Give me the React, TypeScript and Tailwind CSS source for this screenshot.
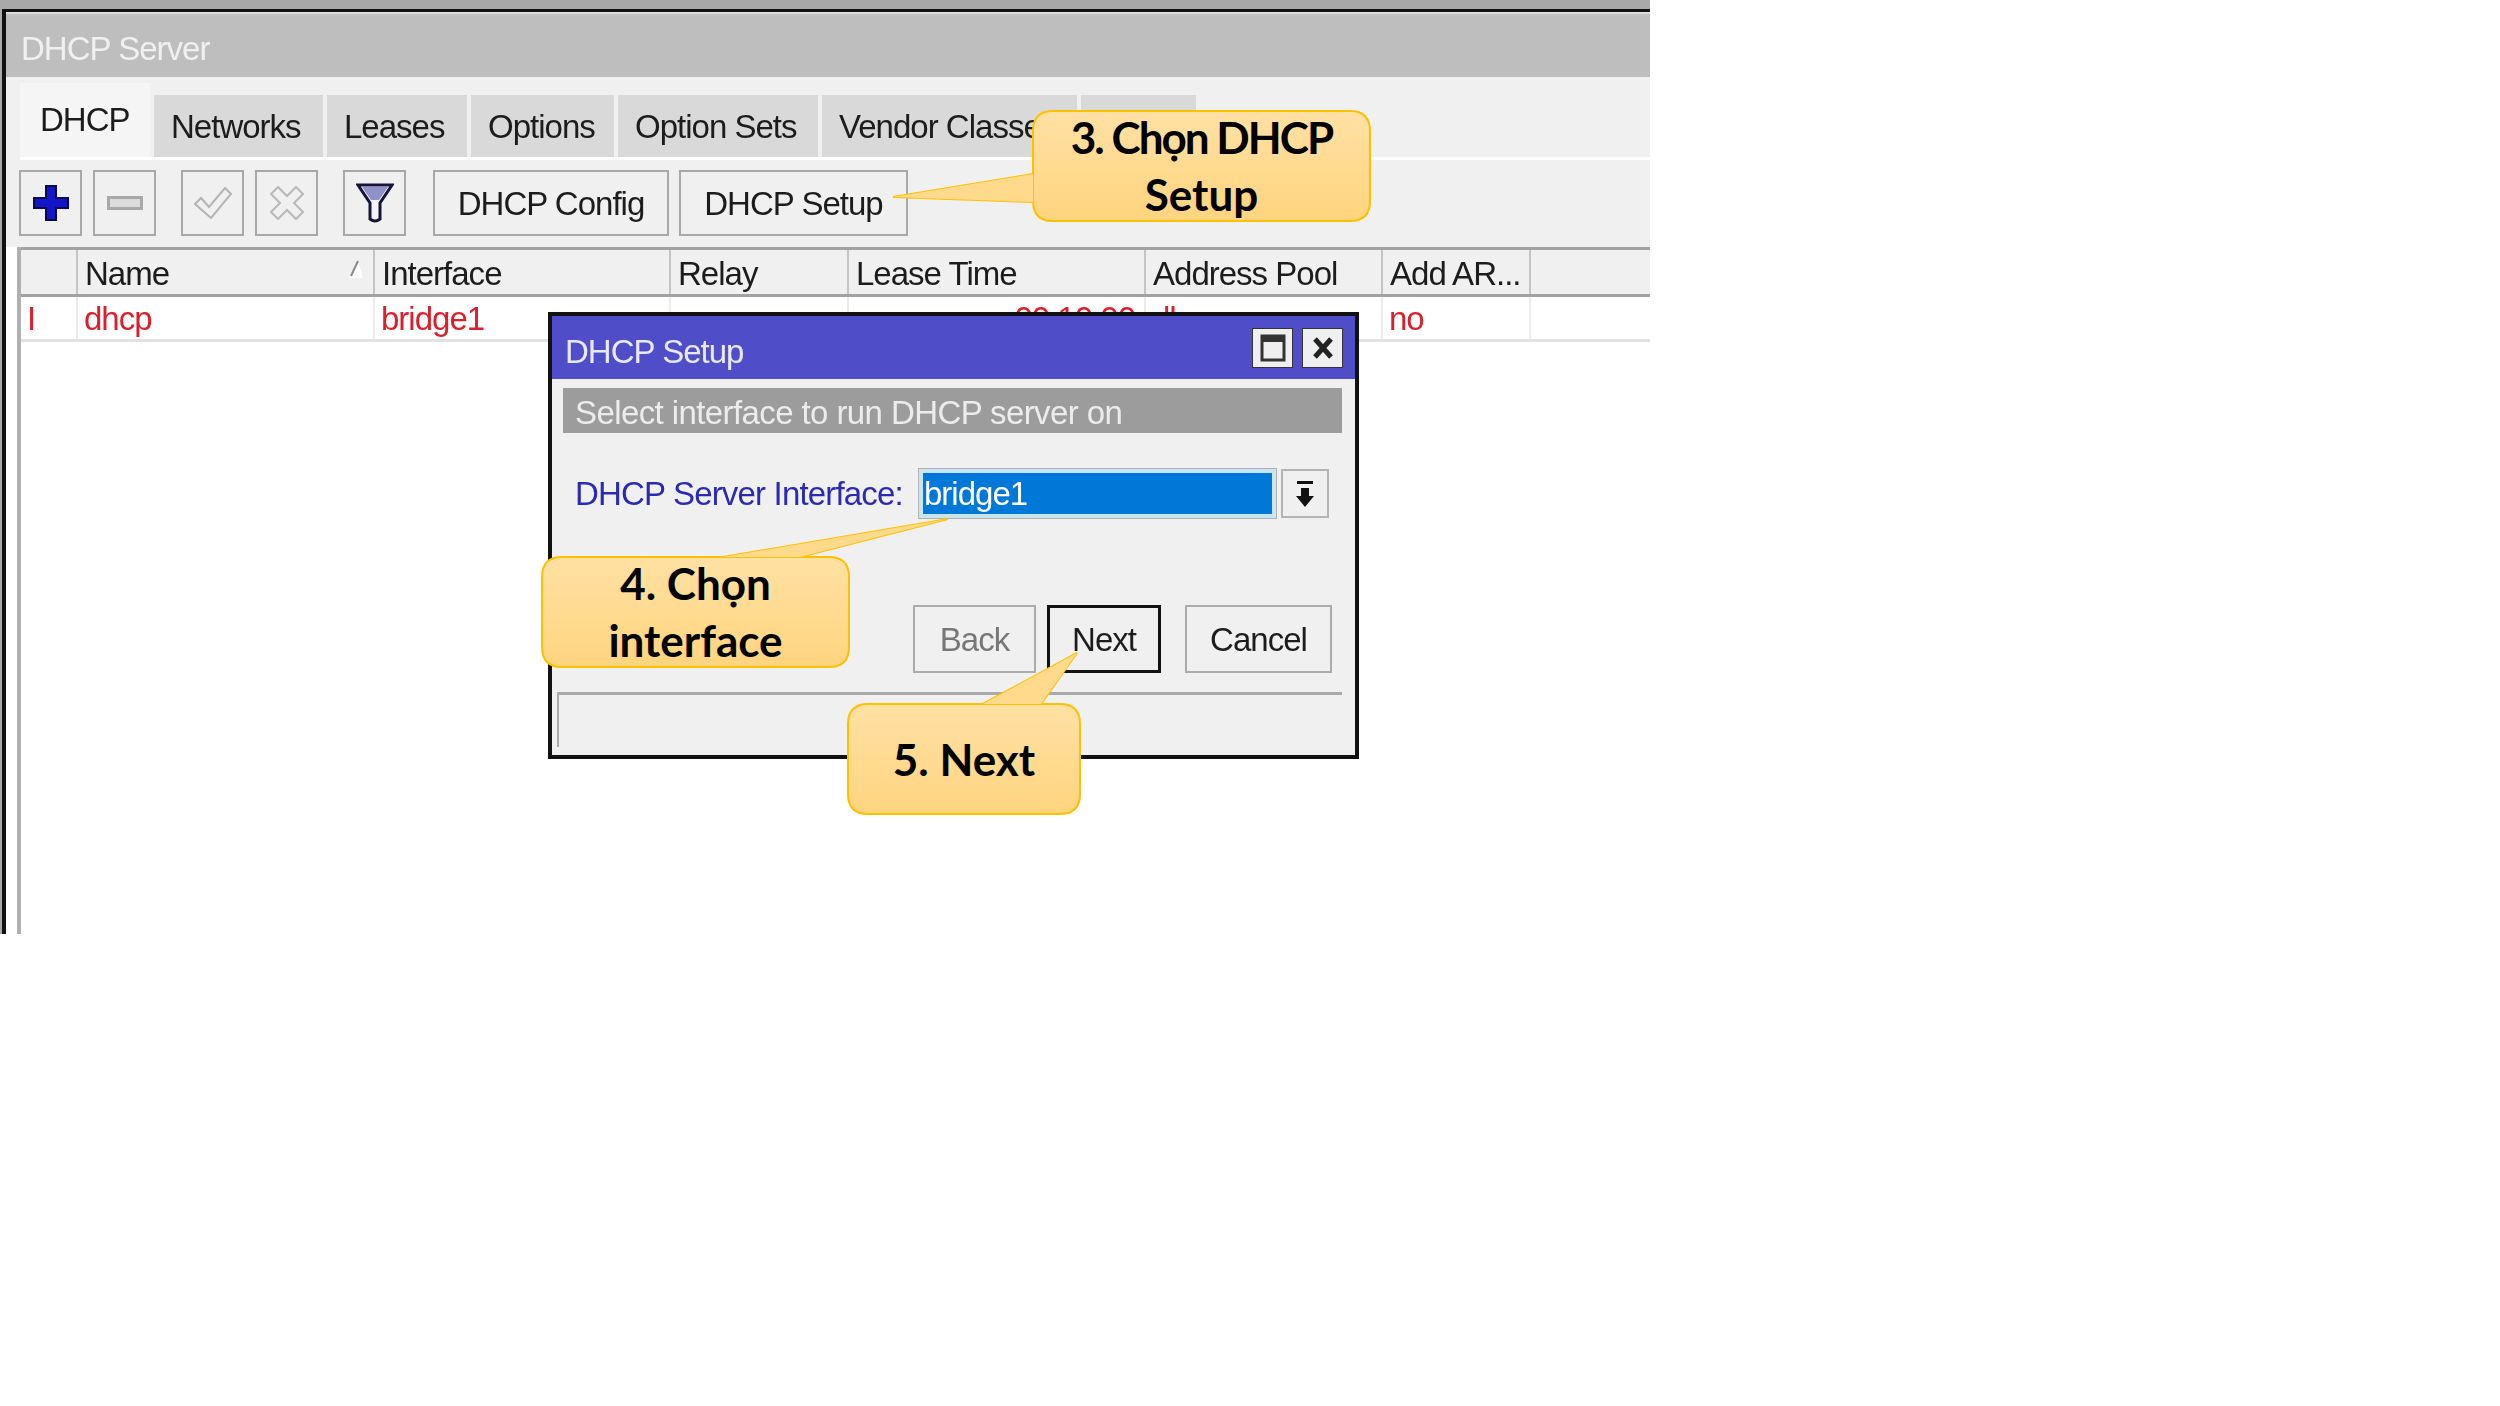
const tabs = [
  { label: "DHCP", w: "w-[130px]", active: true },
  { label: "Networks", w: "w-[169px]" },
  { label: "Leases", w: "w-[140px]" },
  { label: "Options", w: "w-[143px]" },
  { label: "Option Sets", w: "w-[200px]" },
  { label: "Vendor Classes", w: "w-[255px]" },
  { label: "", w: "w-[115px]" },
];

const columns = [
  { label: "", w: "w-[57px]" },
  { label: "Name", w: "w-[297px]", sort: true },
  { label: "Interface", w: "w-[296px]" },
  { label: "Relay", w: "w-[178px]" },
  { label: "Lease Time", w: "w-[297px]" },
  { label: "Address Pool", w: "w-[237px]" },
  { label: "Add AR...", w: "w-[148px]" },
];

const row = ["I", "dhcp", "bridge1", "", "00:10:00", "dhcp", "no"];

function IconButton({ children }: { children: React.ReactNode }) {
  return (
    <button className="flex h-[66px] w-[63px] items-center justify-center border-2 border-[#a8a8a8] bg-[#f0f0f0]">
      {children}
    </button>
  );
}

function TextButton({ label, className }: { label: string; className: string }) {
  return <button className={`h-[66px] border-2 border-[#a8a8a8] bg-[#f0f0f0] pt-[2px] text-[#1c1c1c] ${className}`}>{label}</button>;
}

function Callout({ className, w, h, tail, lines }: { className: string; w: number; h: number; tail: string; lines: { text: string; cls?: string }[] }) {
  const r = 20;
  const rect = `M${r} 0H${w - r}Q${w} 0 ${w} ${r}V${h - r}Q${w} ${h} ${w - r} ${h}H${r}Q0 ${h} 0 ${h - r}V${r}Q0 0 ${r} 0Z`;
  const id = `grad-${w}-${h}`;
  return (
    <div className={`absolute flex flex-col items-center justify-center font-['Lato',sans-serif] text-[44px] font-bold leading-[57px] text-black ${className}`}>
      <svg className="absolute inset-0 overflow-visible" width={w} height={h}>
        <defs>
          <linearGradient id={id} x1="0" y1="0" x2="0" y2="1">
            <stop offset="0" stopColor="#ffe1a4" />
            <stop offset="1" stopColor="#ffd47e" />
          </linearGradient>
        </defs>
        <path d={tail} fill="#ffd98c" stroke="#ffc000" strokeWidth="2" />
        <path d={rect} fill={`url(#${id})`} stroke="#ffc000" strokeWidth="2" />
        <path d={tail} fill="#ffd98c" stroke="none" />
      </svg>
      {lines.map((l) => (
        <span key={l.text} className={`relative ${l.cls ?? ""}`}>{l.text}</span>
      ))}
    </div>
  );
}

function Dialog() {
  return (
    <div className="absolute left-[548px] top-[312px] flex h-[447px] w-[811px] flex-col border-[4px] border-[#111] bg-[#f0f0f0] text-[33px] tracking-[-0.03em]">
      <div className="flex h-[63px] items-center justify-between bg-[#4f4ec8] pl-[13px] pr-[12px] text-[#e8e8f4]">
        <span className="mt-[8px]">DHCP Setup</span>
        <div className="flex gap-[9px]">
          <div className="flex h-[40px] w-[41px] items-center justify-center border border-[#333] bg-[#efefef]">
            <svg width="26" height="28" viewBox="0 0 26 28">
              <rect x="2" y="2" width="22" height="24" fill="none" stroke="#333" strokeWidth="3" />
              <rect x="2" y="2" width="22" height="6" fill="#333" />
            </svg>
          </div>
          <div className="flex h-[40px] w-[41px] items-center justify-center border border-[#333] bg-[#efefef]">
            <svg width="22" height="24" viewBox="0 0 22 24">
              <path d="M3 3 19 21M19 3 3 21" stroke="#222" strokeWidth="5" />
            </svg>
          </div>
        </div>
      </div>
      <div className="ml-[11px] mr-[13px] mt-[9px] flex h-[45px] items-center bg-[#9c9c9c] pl-[12px] pt-[5px] tracking-[-0.018em] text-[#ececec]">Select interface to run DHCP server on</div>
      <div className="mt-[36px] flex h-[49px] items-center pl-[23px]">
        <span className="w-[344px] pt-[1px] tracking-[-0.025em] text-[#2a2ab4]">DHCP Server Interface:</span>
        <div className="flex h-full w-[357px] items-center border-[4px] border-[#c8e6f2] bg-[#0078d7] pl-[1px] text-white outline outline-1 outline-[#b0b0b0]">bridge1</div>
        <button className="ml-[5px] flex h-full w-[48px] items-center justify-center border-2 border-[#b4b4b4]">
          <svg width="20" height="28" viewBox="0 0 20 28">
            <rect x="2" y="1" width="16" height="3" fill="#111" />
            <path d="M6 8h8v8h5L10 27 1 16h5Z" fill="#111" />
          </svg>
        </button>
      </div>
      <div className="mt-[87px] flex justify-end pr-[23px]">
        <button className="h-[68px] w-[123px] border-2 border-[#ababab] pt-[1px] text-[#777]">Back</button>
        <button className="ml-[11px] h-[68px] w-[114px] border-[3px] border-[#111] pt-[1px] text-[#1c1c1c]">Next</button>
        <button className="ml-[24px] h-[68px] w-[147px] border-2 border-[#ababab] pt-[1px] text-[#1c1c1c]">Cancel</button>
      </div>
      <div className="ml-[5px] mr-[13px] mt-[19px] h-[55px] border-l-2 border-t-[3px] border-[#aaaaaa]" />
    </div>
  );
}

export default function App() {
  return (
    <div className="relative h-[1406px] w-[2500px] overflow-hidden bg-white font-['Liberation_Sans',sans-serif]">
      <div className="relative h-[934px] w-[1650px] blur-[0.6px]">
        <div className="flex h-full flex-col bg-[#a9a9a9] pl-[2px] pt-[9px] text-[33px] tracking-[-0.03em]">
          <div className="flex min-h-0 flex-1 flex-col border-l-[4px] border-t-[3px] border-[#111] bg-white">
            <div className="flex h-[65px] items-center border-t-2 border-[#dcdcdc] bg-[#bebebe] pl-[15px] pt-[7px] text-[#f0f0f0]">DHCP Server</div>
            <div className="bg-[#f0f0f0] pl-[13px]">
              <div className="ml-[1px] flex h-[83px] items-end gap-[4px] border-b-[3px] border-white">
                {tabs.map((t) => (
                  <div
                    key={t.w}
                    className={
                      t.active
                        ? `flex h-[74px] items-center bg-[#f5f5f5] pl-[20px] text-[#1c1c1c] ${t.w}`
                        : `flex h-[62px] items-center overflow-hidden whitespace-nowrap bg-[#d9d9d9] pl-[17px] pt-[2px] text-[#1c1c1c] ${t.w}`
                    }
                  >
                    {t.label}
                  </div>
                ))}
              </div>
              <div className="flex items-center pb-[11px] pt-[10px]">
                <IconButton>
                  <svg width="36" height="36" viewBox="0 0 36 36">
                    <path d="M13 1h10v12h12v10H23v12H13V23H1V13h12Z" fill="#1414c8" stroke="#0a0a50" strokeWidth="2" />
                  </svg>
                </IconButton>
                <div className="ml-[11px]">
                  <IconButton>
                    <svg width="36" height="14" viewBox="0 0 36 14">
                      <rect x="1.5" y="1.5" width="33" height="11" fill="#dcdcdc" stroke="#a8a8a8" strokeWidth="3" />
                    </svg>
                  </IconButton>
                </div>
                <div className="ml-[25px]">
                  <IconButton>
                    <svg width="38" height="32" viewBox="0 0 38 32">
                      <path d="M1 17l6-6 8 9L31 1l6 6-20 24Z" fill="none" stroke="#b4b4b4" strokeWidth="2" />
                    </svg>
                  </IconButton>
                </div>
                <div className="ml-[11px]">
                  <IconButton>
                    <svg width="34" height="34" viewBox="0 0 34 34">
                      <path d="M8 1l9 9 9-9 7 7-9 9 9 9-7 7-9-9-9 9-7-7 9-9-9-9Z" fill="none" stroke="#b8b8b8" strokeWidth="2" />
                    </svg>
                  </IconButton>
                </div>
                <div className="ml-[25px]">
                  <IconButton>
                    <svg width="38" height="40" viewBox="0 0 38 40">
                      <path d="M2 2h34L24 20v16q-5 4-10 0V20Z" fill="#f4f4fa" stroke="#14143c" strokeWidth="3" />
                      <path d="M6 4h26L23 17H15Z" fill="#8f92c8" />
                    </svg>
                  </IconButton>
                </div>
                <TextButton label="DHCP Config" className="ml-[27px] w-[236px]" />
                <TextButton label="DHCP Setup" className="ml-[10px] w-[229px]" />
              </div>
            </div>
            <div className="ml-[11px] flex-1 border-l-4 border-[#b0b0b0] bg-white">
              <div className="flex h-[50px] border-y-[3px] border-[#a2a2a2] bg-[#f0f0f0]">
                {columns.map((c) => (
                  <div key={c.w + c.label} className={`relative flex items-center border-r-2 border-[#c4c4c4] pl-[7px] pt-[3px] text-[#1c1c1c] ${c.w}`}>
                    {c.label}
                    {c.sort && (
                      <svg className="absolute right-[7px] top-[10px]" width="22" height="22" viewBox="0 0 22 22">
                        <path d="M14 1 5 18h14Z" fill="#fff" />
                        <path d="M14 1 7 16" fill="none" stroke="#8a8a8a" strokeWidth="2" />
                      </svg>
                    )}
                  </div>
                ))}
              </div>
              <div className="flex h-[45px] border-b-[3px] border-[#e2e2e2] bg-white text-[#dc1f2c]">
                {columns.map((c, i) => (
                  <div key={c.w + c.label} className={`flex items-center whitespace-nowrap border-r-2 border-[#ececec] pt-[2px] ${i === 4 ? "justify-end pr-[9px]" : "pl-[6px]"} ${c.w}`}>
                    {row[i]}
                  </div>
                ))}
              </div>
            </div>
          </div>
        </div>
        <Dialog />
      </div>
      <Callout
        className="left-[1033px] top-[111px] h-[110px] w-[337px]"
        w={337}
        h={110}
        tail="M0 63-140 86 0 91Z"
        lines={[{ text: "3. Chọn DHCP", cls: "tracking-[-0.045em]" }, { text: "Setup" }]}
      />
      <Callout
        className="left-[542px] top-[557px] h-[110px] w-[307px]"
        w={307}
        h={110}
        tail="M181 0 406-38 258 0Z"
        lines={[{ text: "4. Chọn" }, { text: "interface" }]}
      />
      <Callout
        className="left-[848px] top-[704px] h-[110px] w-[232px]"
        w={232}
        h={110}
        tail="M135 0 229-51 193 0Z"
        lines={[{ text: "5. Next" }]}
      />
    </div>
  );
}
